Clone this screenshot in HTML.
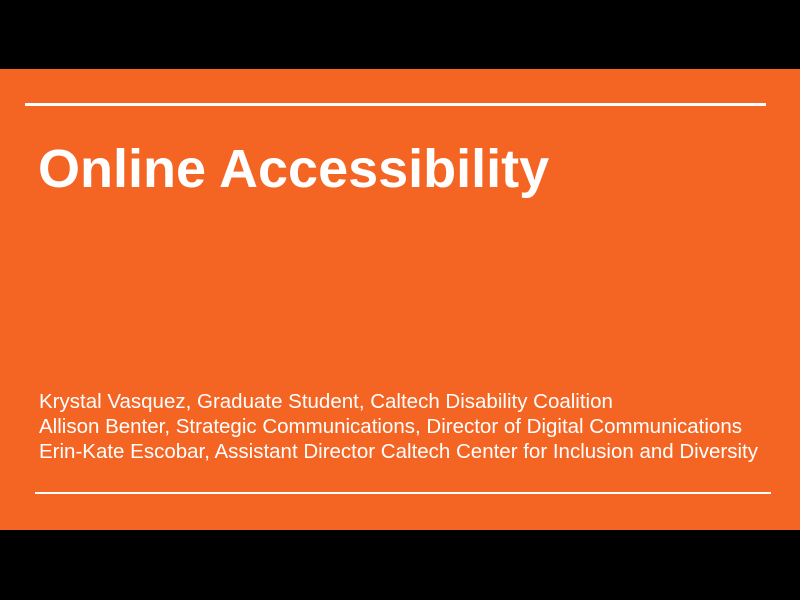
<!DOCTYPE html>
<html><head><style>
body{margin:0;width:800px;height:600px;background:#000;position:relative;overflow:hidden;font-family:"Liberation Sans",sans-serif}
.s{position:absolute;left:0;top:69px;width:800px;height:461px;background:#F46524}
.l1{position:absolute;left:25px;top:103px;width:741px;height:3px;background:#fff}
.l2{position:absolute;left:35px;top:492px;width:736px;height:2px;background:#fff}
h1{position:absolute;left:38px;top:134px;margin:0;color:#fff;font-size:54px;font-weight:bold;line-height:70px;white-space:nowrap}
.t{position:absolute;left:39px;top:389px;color:#fff;font-size:20.5px;line-height:25px;white-space:nowrap}
</style></head><body>
<div class="s"></div><div class="l1"></div>
<h1>Online Accessibility</h1>
<div class="t">Krystal Vasquez, Graduate Student, Caltech Disability Coalition<br>Allison Benter, Strategic Communications, Director of Digital Communications<br>Erin-Kate Escobar, Assistant Director Caltech Center for Inclusion and Diversity</div>
<div class="l2"></div>
</body></html>
